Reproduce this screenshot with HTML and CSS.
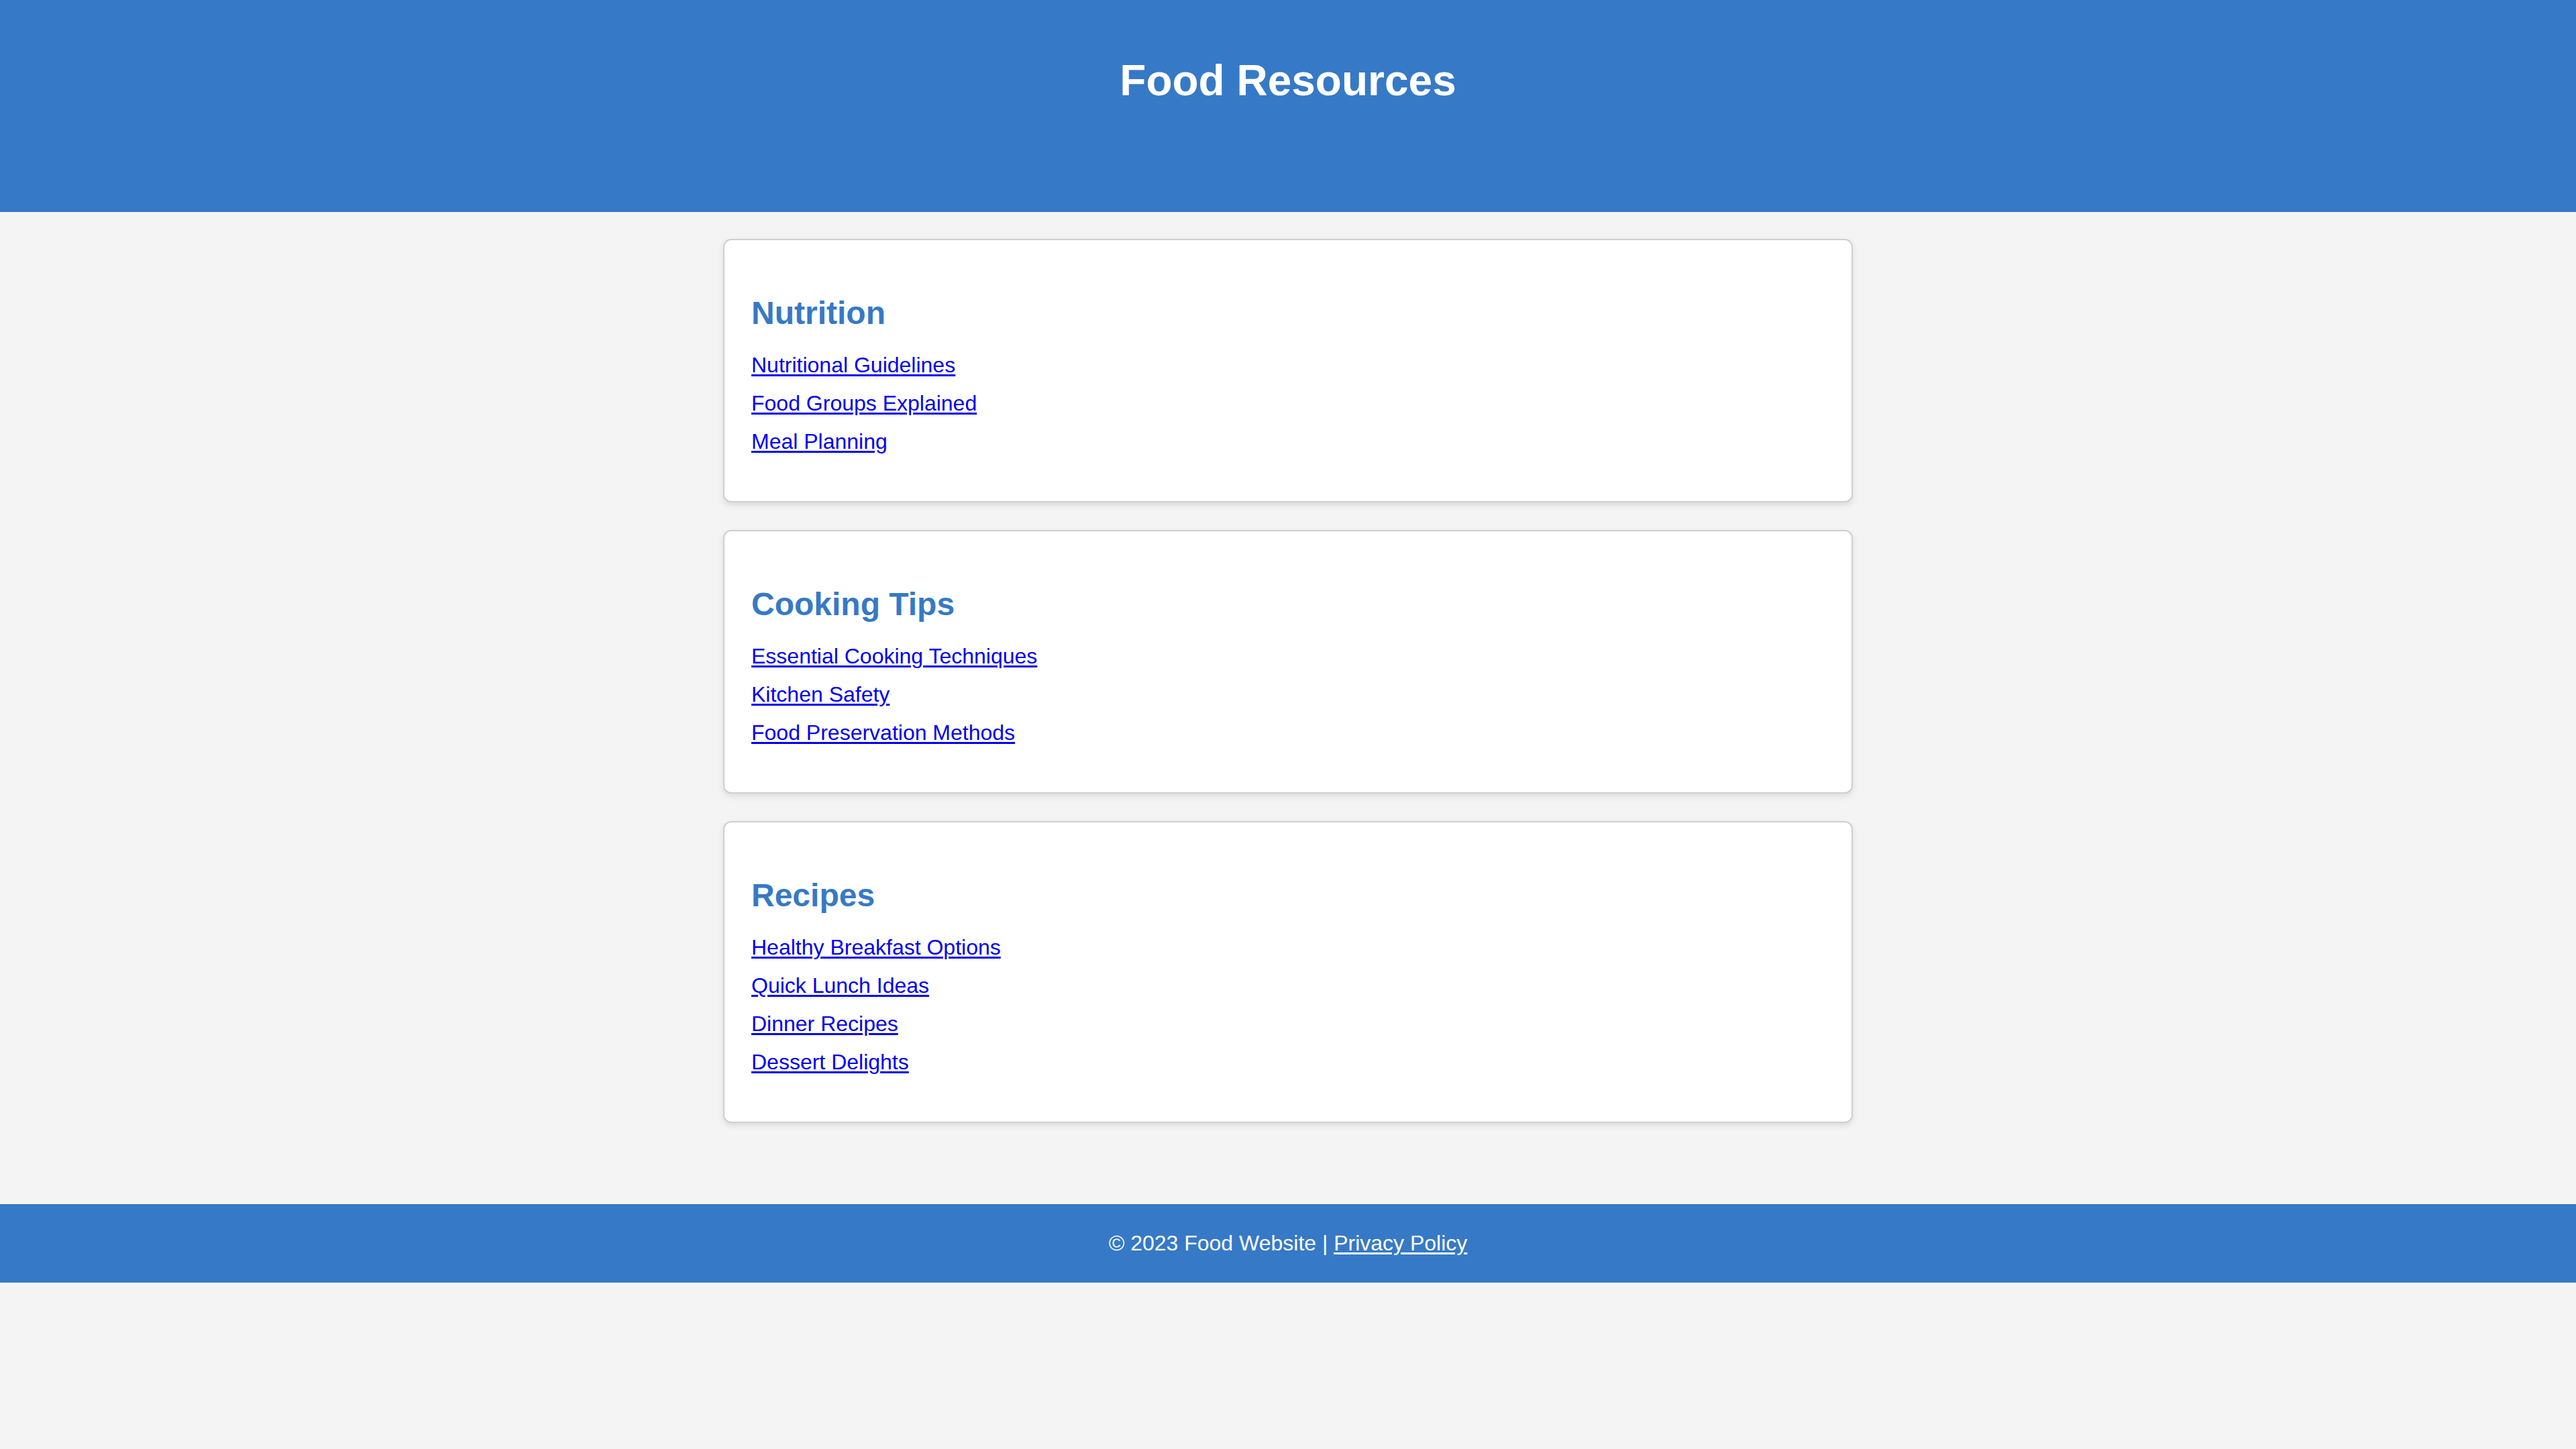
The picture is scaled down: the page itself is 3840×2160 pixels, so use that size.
FILE: index.html
```html
<!DOCTYPE html>
<html lang="en">
<head>
<meta charset="utf-8">
<title>Food Resources</title>
<link rel="stylesheet" href="styles.css">
</head>
<body>
<header class="site-header">
  <h1 class="site-title">Food Resources</h1>
  <nav class="site-nav"></nav>
</header>
<main class="content">
  <section class="card">
    <h2 class="card-title">Nutrition</h2>
    <ul class="link-list">
      <li><a href="#">Nutritional Guidelines</a></li>
      <li><a href="#">Food Groups Explained</a></li>
      <li><a href="#">Meal Planning</a></li>
    </ul>
  </section>
  <section class="card">
    <h2 class="card-title">Cooking Tips</h2>
    <ul class="link-list">
      <li><a href="#">Essential Cooking Techniques</a></li>
      <li><a href="#">Kitchen Safety</a></li>
      <li><a href="#">Food Preservation Methods</a></li>
    </ul>
  </section>
  <section class="card">
    <h2 class="card-title">Recipes</h2>
    <ul class="link-list">
      <li><a href="#">Healthy Breakfast Options</a></li>
      <li><a href="#">Quick Lunch Ideas</a></li>
      <li><a href="#">Dinner Recipes</a></li>
      <li><a href="#">Dessert Delights</a></li>
    </ul>
  </section>
</main>
<footer class="site-footer">
  <p class="footer-text">&copy; 2023 Food Website | <a href="#" class="footer-link">Privacy Policy</a></p>
</footer>
</body>
</html>
```

FILE: styles.css
```css
html, body {
  margin: 0;
  padding: 0;
}
body {
  background: #f4f4f4;
  font-family: "Liberation Sans", Arial, Helvetica, sans-serif;
  font-size: 32px;
  color: #333;
}
.site-header {
  background: #3679c6;
  color: #fff;
  text-align: center;
  padding: 40px 40px 0;
  height: 276px;
}
.site-title {
  margin: 43px 0;
  font-size: 64px;
  font-weight: bold;
  line-height: 74px;
}
.site-nav {
  height: 0;
}
.content {
  width: 1684px;
  margin: 0 auto;
  padding: 40px 0;
}
.card {
  background: #fff;
  border: 2px solid #cfcfcf;
  border-radius: 12px;
  box-shadow: 0 4px 10px rgba(0, 0, 0, 0.1);
  padding: 40px;
  margin-bottom: 41px;
}
.card-title {
  color: #3679c6;
  font-size: 48px;
  font-weight: bold;
  line-height: 55px;
  margin: 41px 0 32px;
}
.link-list {
  list-style: none;
  margin: 0 0 30px;
  padding: 0;
}
.link-list li {
  line-height: 37px;
  margin-bottom: 20px;
}
.link-list li:last-child {
  margin-bottom: 0;
}
.link-list a {
  color: #0000ee;
  text-decoration: underline;
  text-underline-offset: 3px;
  text-decoration-thickness: 3px;
}
.site-footer {
  background: #3679c6;
  color: #fff;
  text-align: center;
  padding: 40px 0;
  margin-top: 40px;
}
.footer-text {
  margin: 0;
  line-height: 37px;
}
.footer-link {
  color: #fff;
  text-decoration: underline;
  text-underline-offset: 3px;
  text-decoration-thickness: 3px;
}
```
